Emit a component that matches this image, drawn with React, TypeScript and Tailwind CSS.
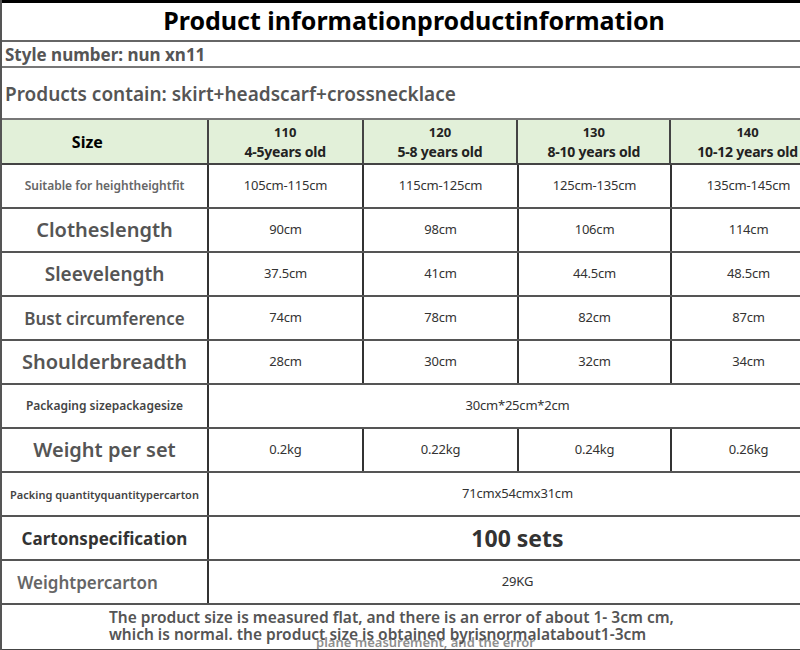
const sizes = [
  { code: '110', age: '4-5years old' },
  { code: '120', age: '5-8 years old' },
  { code: '130', age: '8-10 years old' },
  { code: '140', age: '10-12 years old' },
];

const colW = ['w-[155px]', 'w-[155px]', 'w-[153px]', 'w-[155px]'];

type Row = {
  label: string;
  labelCls: string;
  values?: string[];
  merged?: string;
  mergedCls?: string;
};

const rows: Row[] = [
  {
    label: 'Suitable for heightheightfit',
    labelCls: 'text-[12px] font-semibold text-[#666]',
    values: ['105cm-115cm', '115cm-125cm', '125cm-135cm', '135cm-145cm'],
  },
  {
    label: 'Clotheslength',
    labelCls: 'text-[20px] font-semibold text-[#555]',
    values: ['90cm', '98cm', '106cm', '114cm'],
  },
  {
    label: 'Sleevelength',
    labelCls: 'text-[19px] font-semibold text-[#555]',
    values: ['37.5cm', '41cm', '44.5cm', '48.5cm'],
  },
  {
    label: 'Bust circumference',
    labelCls: 'text-[17px] font-semibold text-[#555]',
    values: ['74cm', '78cm', '82cm', '87cm'],
  },
  {
    label: 'Shoulderbreadth',
    labelCls: 'text-[20px] font-semibold text-[#555]',
    values: ['28cm', '30cm', '32cm', '34cm'],
  },
  {
    label: 'Packaging sizepackagesize',
    labelCls: 'text-[12px] font-semibold text-[#444]',
    merged: '30cm*25cm*2cm',
  },
  {
    label: 'Weight per set',
    labelCls: 'text-[20px] font-semibold text-[#555]',
    values: ['0.2kg', '0.22kg', '0.24kg', '0.26kg'],
  },
  {
    label: 'Packing quantityquantitypercarton',
    labelCls: 'text-[11px] font-semibold text-[#444]',
    merged: '71cmx54cmx31cm',
  },
  {
    label: 'Cartonspecification',
    labelCls: 'text-[17px] font-bold text-[#333]',
    merged: '100 sets',
    mergedCls: 'text-[23px] font-bold text-[#333]',
  },
  {
    label: 'Weightpercarton',
    labelCls: 'text-[17px] font-semibold text-[#666] pr-[34px]',
    merged: '29KG',
  },
];

export default function App() {
  return (
    <div className="w-[800px] h-[650px] overflow-hidden bg-white font-['Noto_Sans',sans-serif]">
      <div className="w-[826px] border-l-2 border-[#555]">
        <div className="h-[42px] border-t-[3px] border-b-2 border-t-black border-b-[#666] flex items-center justify-center">
          <h1 className="text-[25px] font-bold text-black leading-none pb-[2px]">
            Product informationproductinformation
          </h1>
        </div>
        <div className="h-[26px] border-b-2 border-[#777] flex items-center pl-[3px]">
          <span className="text-[17px] font-bold text-[#555] leading-none">Style number: nun xn11</span>
        </div>
        <div className="h-[52px] border-b-2 border-[#777] flex items-center pl-[3px] pt-[3px]">
          <span className="text-[19px] font-semibold text-[#555] leading-none">
            Products contain: skirt+headscarf+crossnecklace
          </span>
        </div>

        <div className="h-[45px] flex border-b-2 border-[#444] bg-[#e2f0d9]">
          <div className="w-[207px] border-r-2 border-[#444] flex items-center justify-center pr-[34px]">
            <span className="text-[16px] font-bold text-black">Size</span>
          </div>
          {sizes.map((s, i) => (
            <div
              key={s.code}
              className={`${colW[i]} border-r-2 border-[#444] flex flex-col items-center justify-center text-[#222] font-bold leading-[19px]`}
            >
              <span className="text-[13px]">{s.code}</span>
              <span className="text-[14px] tracking-[-0.2px]">{s.age}</span>
            </div>
          ))}
        </div>

        {rows.map((r) => (
          <div key={r.label} className="h-[44px] flex border-b-2 border-[#555]">
            <div className="w-[207px] shrink-0 border-r-2 border-[#333] flex items-center justify-center">
              <span className={`${r.labelCls} leading-none whitespace-nowrap`}>{r.label}</span>
            </div>
            {r.values ? (
              r.values.map((v, i) => (
                <div
                  key={i}
                  className={`${colW[i]} shrink-0 border-r-2 border-[#333] flex items-center justify-center`}
                >
                  <span className="text-[13px] text-[#333] tracking-[-0.2px]">{v}</span>
                </div>
              ))
            ) : (
              <div className="flex-1 flex items-center justify-center">
                <span className={r.mergedCls ?? 'text-[13px] text-[#333] tracking-[-0.2px]'}>{r.merged}</span>
              </div>
            )}
          </div>
        ))}

        <div className="relative h-[46px] border-b-2 border-[#444] pl-[107px] pt-[4px]">
          <p className="text-[15.5px] font-semibold text-[#555] leading-[17px]">
            The product size is measured flat, and there is an error of about 1- 3cm cm,
            <br />
            which is normal. the product size is obtained byrisnormalatabout1-3cm
          </p>
          <span className="absolute left-[314px] top-[31px] text-[13px] font-semibold text-[#444] opacity-60 leading-none">
            plane measurement, and the error
          </span>
        </div>
      </div>
    </div>
  );
}
